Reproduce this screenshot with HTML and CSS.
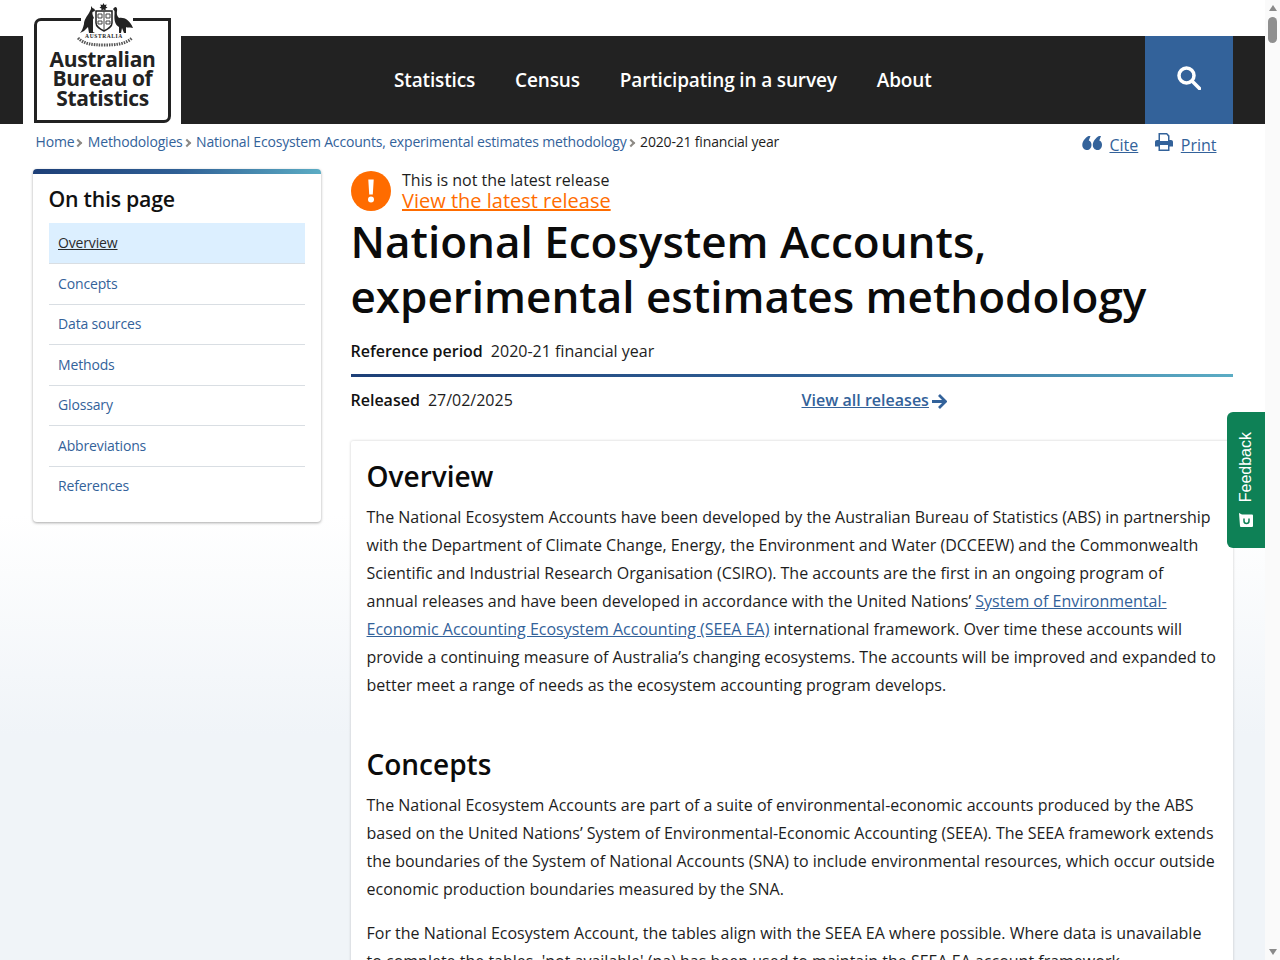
FILE: index.html
```html
<!DOCTYPE html>
<html lang="en">
<head>
<meta charset="utf-8">
<title>National Ecosystem Accounts, experimental estimates methodology</title>
<link rel="stylesheet" href="styles.css">
</head>
<body>
<div class="viewport">
  <header class="topbar">
    <div class="band">
      <div class="logo-plate">
        <div class="logo">
          <svg class="crest" viewBox="0 0 66 48" aria-hidden="true">
            <rect class="crest-gap" x="9" y="15" width="52" height="8"/>
            <path class="crest-fill" d="M31.500 3l1 2 2.200-.5-.8 2 1.600 1.300-2 .6.200 2-2.200-1-2.200 1 .2-2-2-.6 1.600-1.300-.8-2 2.200.5z"/>
            <path class="crest-fill" d="M8 33C10 31 11 28 12 24 12 20 15 16 17 13L19 9 19 6 20.500 8 22.500 9 23 11 20.500 12C20 14 21 16 22 18L21 19 21 32 23 33H17L16 27 12 31Z"/>
            <path class="crest-fill" d="M41 9L43 7C45 7 45.500 9 45 11 44.500 14 45 16 47 18 52 17 58 20 61 28 57 27 55 28 54 27L54 33H52L50 28 49 33H47L47 27C43 25 42 20 42.500 14L42.500 11Z"/>
            <path class="crest-shield" d="M24 11h16v12c0 4-4 6-8 8-4-2-8-4-8-8z"/>
            <path class="crest-line" d="M26 14h4v4h-4zM34 14h4v4h-4zM26 21h4v3h-4zM34 21h4v3h-4zM32 11v19"/>
            <path class="crest-wreath" d="M6 38c6 6 14 7 26 7s22-1 28-7"/>
            <text class="crest-text" x="32" y="38" text-anchor="middle">AUSTRALIA</text>
          </svg>
          <div class="logo-words">Australian<br>Bureau of<br>Statistics</div>
        </div>
      </div>
      <nav class="mainnav">
        <a href="#">Statistics</a>
        <a href="#">Census</a>
        <a href="#">Participating in a survey</a>
        <a href="#">About</a>
      </nav>
      <button class="search" aria-label="Search">
        <svg viewBox="0 0 24 24" class="search-icon"><circle cx="9.500" cy="9.500" r="7.500" /><path d="M15.500 15.500l7 7"/></svg>
      </button>
    </div>
  </header>

  <div class="crumbrow">
    <div class="crumbs">
      <a href="#">Home</a><span class="sep"></span><a href="#">Methodologies</a><span class="sep"></span><a href="#">National Ecosystem Accounts, experimental estimates methodology</a><span class="sep"></span><span class="current">2020-21 financial year</span>
    </div>
    <div class="tools">
      <span class="tool">
        <svg class="tool-icon quote" viewBox="0 0 20 14"><path d="M6.500 0h2L6.800 4.600C8.400 5 9.500 6.600 9.500 8.700 9.500 11.800 7.600 14 5 14 2.200 14 .3 11.800.3 9 .3 5.800 2.800 2 6.500 0zM17 0h2l-1.700 4.600c1.600.4 2.700 2 2.700 4.100 0 3.100-1.900 5.300-4.500 5.300-2.800 0-4.700-2.200-4.700-5 0-3.200 2.500-7 6.200-9z"/></svg>
        <a href="#">Cite</a>
      </span>
      <span class="tool">
        <svg class="tool-icon printer" viewBox="0 0 18 18"><path fill-rule="evenodd" d="M3.500 0h8.500l2.500 2.500V7H16c1.200 0 2 .8 2 2v4.500h-3.500V18h-11v-4.500H0V9c0-1.200.8-2 2-2h1.500zM5 1.500V8h8V3.500L11.500 1.500zM5 12v4.500h8V12z"/></svg>
        <a href="#">Print</a>
      </span>
    </div>
  </div>

  <div class="layout">
    <aside class="toc">
      <h2>On this page</h2>
      <ul>
        <li class="active"><a href="#">Overview</a></li>
        <li><a href="#">Concepts</a></li>
        <li><a href="#">Data sources</a></li>
        <li><a href="#">Methods</a></li>
        <li><a href="#">Glossary</a></li>
        <li><a href="#">Abbreviations</a></li>
        <li><a href="#">References</a></li>
      </ul>
    </aside>

    <main class="content">
      <div class="notice">
        <span class="notice-icon"><svg viewBox="0 0 40 40"><path d="M17.300 8.500h5.400l-.9 15h-3.600z"/><circle cx="20" cy="28.500" r="3"/></svg></span>
        <div class="notice-text">
          <div>This is not the latest release</div>
          <a href="#">View the latest release</a>
        </div>
      </div>
      <h1>National Ecosystem Accounts, experimental estimates methodology</h1>
      <p class="refperiod"><strong>Reference period</strong>2020-21 financial year</p>
      <div class="rule"></div>
      <div class="released">
        <p class="released-date"><strong>Released</strong>27/02/2025</p>
        <a class="all-releases" href="#"><span>View all releases</span><svg viewBox="0 0 15 15" class="arrow"><path d="M0 7.500h13M7 1l6.500 6.500L7 14"/></svg></a>
      </div>
      <article class="card">
        <h2>Overview</h2>
        <p>The National Ecosystem Accounts have been developed by the Australian Bureau of Statistics (ABS) in partnership with the Department of Climate Change, Energy, the Environment and Water (DCCEEW) and the Commonwealth Scientific and Industrial Research Organisation (CSIRO). The accounts are the first in an ongoing program of annual releases and have been developed in accordance with the United Nations’ <a href="#">System of Environmental-Economic Accounting Ecosystem Accounting (SEEA EA)</a> international framework. Over time these accounts will provide a continuing measure of Australia’s changing ecosystems. The accounts will be improved and expanded to better meet a range of needs as the ecosystem accounting program develops.</p>
        <h2 class="second">Concepts</h2>
        <p>The National Ecosystem Accounts are part of a suite of environmental-economic accounts produced by the ABS based on the United Nations’ System of Environmental-Economic Accounting (SEEA). The SEEA framework extends the boundaries of the System of National Accounts (SNA) to include environmental resources, which occur outside economic production boundaries measured by the SNA.</p>
        <p>For the National Ecosystem Account, the tables align with the SEEA EA where possible. Where data is unavailable to complete the tables, 'not available' (na) has been used to maintain the SEEA EA account framework.</p>
      </article>
    </main>
  </div>

  <button class="feedback">
    <svg class="fb-icon" viewBox="0 0 16 16"><path d="M1 1l3 1.500h10a1 1 0 0 1 1 1V14a1 1 0 0 1-1 1H3a1 1 0 0 1-1-1z"/><path class="fb-smile" d="M6 6.500v2.500a2.500 2.500 0 0 0 5 0V6.500"/></svg>
    <span>Feedback</span>
  </button>
</div>
<div class="scrollbar">
  <span class="sb-up"></span>
  <span class="sb-thumb"></span>
  <span class="sb-space"></span>
  <span class="sb-down"></span>
</div>
</body>
</html>
```
FILE: styles.css
```css
* { box-sizing: border-box; }
html, body { margin: 0; height: 960px; overflow: hidden; }
body {
  display: flex;
  width: 1280px;
  font-family: "Open Sans", "Liberation Sans", sans-serif;
  color: #1d1d1d;
  background: #fff;
}
a { color: #33629a; }
.viewport {
  position: relative;
  width: 1265px;
  height: 960px;
  overflow: hidden;
  background: linear-gradient(180deg, #fff 0, #fff 515px, #f0f4f8 735px, #f0f4f8 100%);
}
.topbar { padding-top: 36px; }
.band {
  height: 88px;
  background: #222;
  display: flex;
  align-items: stretch;
  padding-left: 23px;
  padding-right: 32px;
}
.logo-plate {
  position: relative;
  width: 158px;
  background: #fff;
}
.logo {
  position: absolute;
  left: 11px;
  top: -18px;
  width: 137px;
  height: 105px;
  border: 3px solid #222;
  border-radius: 7px 0 7px 0;
  text-align: center;
  background: #fff;
}
.crest {
  position: absolute;
  left: 35px;
  top: -21px;
  width: 66px;
  height: 48px;
}
.crest-gap { fill: #fff; }
.crest-fill { fill: #222; }
.crest-shield { fill: #fff; stroke: #222; stroke-width: 1.500; }
.crest-line { fill: none; stroke: #444; stroke-width: 1; }
.crest-wreath { fill: none; stroke: #555; stroke-width: 3; stroke-dasharray: 1.500 1; }
.crest-text { font-family: "Liberation Serif", serif; font-size: 5.500px; font-weight: 700; fill: #222; letter-spacing: .6px; }
.logo-words {
  position: absolute;
  left: 0;
  right: 0;
  top: 28.500px;
  font-size: 21px;
  line-height: 19.700px;
  font-weight: 700;
  color: #222;
  letter-spacing: -0.35px;
}
.mainnav {
  display: flex;
  align-items: center;
  gap: 40px;
  margin-left: 213px;
  flex: 1;
}
.mainnav a {
  color: #fff;
  font-size: 19px;
  font-weight: 600;
  text-decoration: none;
  letter-spacing: -0.15px;
}
.search {
  width: 88px;
  border: 0;
  padding: 0;
  background: #33629a;
  display: flex;
  align-items: center;
  justify-content: center;
}
.search-icon {
  width: 24px;
  height: 24px;
  margin-top: -4px;
  fill: none;
  stroke: #fff;
  stroke-width: 3.500;
  stroke-linecap: round;
}
.crumbrow {
  display: flex;
  justify-content: space-between;
  height: 45px;
  padding: 7px 48.500px 0 35.500px;
}
.crumbs {
  display: flex;
  align-items: center;
  height: 20px;
  font-size: 14px;
  letter-spacing: -0.18px;
}
.crumbs a { text-decoration: none; }
.current { color: #1d1d1d; }
.sep {
  width: 6px;
  height: 6px;
  margin: 3px 6.500px 0 1px;
  border-top: 2px solid #8d8a85;
  border-right: 2px solid #8d8a85;
  transform: rotate(45deg);
}
.tools { display: flex; gap: 16.500px; font-size: 16px; }
.tool { display: flex; align-items: center; gap: 8px; height: 24px; margin-top: 2px; }
.tool-icon { fill: #33629a; display: block; }
.quote { width: 20px; height: 14px; margin-top: -4px; margin-right: -1px; }
.printer { width: 18px; height: 18px; margin-top: -6px; }
.layout {
  display: flex;
  align-items: flex-start;
  gap: 29.500px;
  padding: 0 32px 0 33px;
}
.toc {
  flex: 0 0 288px;
  height: 353px;
  padding: 15px 16px 0;
  background: #fff;
  border-radius: 4px;
  position: relative;
  box-shadow: 0 1px 3px rgba(0, 0, 0, .35);
  overflow: hidden;
}
.toc::before {
  content: "";
  position: absolute;
  left: 0;
  right: 0;
  top: 0;
  height: 5px;
  background: linear-gradient(90deg, #1d3f77, #2f5f95 50%, #5bacc4);
}
.toc h2 {
  margin: 0 0 9px -0.5px;
  font-size: 21.300px;
  line-height: 30px;
  font-weight: 600;
  color: #111;
  letter-spacing: -0.25px;
}
.toc ul { list-style: none; margin: 0; padding: 0; }
.toc li {
  height: 40.500px;
  display: flex;
  align-items: center;
  padding: 0 0 .6px 9px;
  font-size: 14px;
  letter-spacing: -0.15px;
  border-bottom: 1px solid #d9dee3;
}
.toc li:last-child { border-bottom: 0; padding-bottom: 1.600px; }
.toc li a { text-decoration: none; }
.toc li.active { background: #dcefff; height: 41px; }
.toc li.active a { color: #2b2b2b; text-decoration: underline; }
.content { flex: 1; min-width: 0; }
.notice { display: flex; align-items: flex-start; gap: 11.500px; height: 45px; padding-top: 2px; }
.notice-icon {
  flex: 0 0 40px;
  width: 40px;
  height: 40px;
  border-radius: 50%;
  background: #ff6c00;
}
.notice-icon svg { display: block; fill: #fff; width: 40px; height: 40px; }
.notice-text { font-size: 16px; line-height: 20px; margin-top: -1px; color: #1d1d1d; }
.notice-text a { color: #ff6c00; font-size: 20px; line-height: 21px; display: block; }
h1 {
  margin: 0;
  font-size: 44px;
  line-height: 55px;
  font-weight: 600;
  color: #0b0b0b;
}
.refperiod, .released-date { margin: 0; font-size: 16px; line-height: 24px; }
.refperiod { margin-top: 15px; }
.refperiod strong, .released-date strong { font-weight: 600; margin-right: 8px; color: #111; }
.rule {
  height: 3px;
  margin-top: 11px;
  background: linear-gradient(90deg, #1d3f77, #2f5f95 50%, #5bacc4);
}
.released { display: flex; height: 64px; padding-top: 11px; }
.released-date { width: 451px; }
.all-releases {
  display: flex;
  align-items: center;
  height: 24px;
  font-size: 16px;
  font-weight: 600;
  gap: 3px;
  letter-spacing: .02px;
  text-decoration: none;
}
.all-releases span { text-decoration: underline; }
.arrow { width: 15px; height: 15px; margin-top: 2px; fill: none; stroke: #33629a; stroke-width: 2.800; }
.card {
  background: #fff;
  padding: 15px 16px 0 16px;
  box-shadow: 0 0 3px rgba(0, 0, 0, .2);
  height: 600px;
  border-radius: 2px;
}
.card h2 {
  margin: 0 0 7px;
  font-size: 28px;
  line-height: 40px;
  font-weight: 600;
  color: #0b0b0b;
}
.card h2.second { margin-top: 45px; }
.card p {
  margin: 0 0 16px;
  font-size: 16px;
  line-height: 28px;
  color: #1d1d1d;
}
.feedback {
  position: absolute;
  right: 0;
  top: 412px;
  width: 38px;
  height: 136px;
  padding: 0 0 20px;
  border: 0;
  border-radius: 6px 0 0 6px;
  background: #0e8156;
  color: #fff;
  display: flex;
  flex-direction: column-reverse;
  align-items: center;
  justify-content: flex-start;
  gap: 10px;
  font-family: "Liberation Sans", sans-serif;
}
.feedback span {
  writing-mode: vertical-rl;
  transform: rotate(180deg);
  font-size: 16px;
  line-height: 18px;
}
.fb-icon { width: 16px; height: 16px; fill: #fff; flex: none; }
.fb-smile { fill: none; stroke: #0e8156; stroke-width: 1.500; }
.scrollbar {
  width: 15px;
  height: 960px;
  background: #fafafa;
  display: flex;
  flex-direction: column;
  align-items: center;
}
.sb-up, .sb-down {
  width: 0;
  height: 0;
  border-left: 4.500px solid transparent;
  border-right: 4.500px solid transparent;
  margin: 5px 0;
}
.sb-up { border-bottom: 6px solid #8a8a8a; }
.sb-down { border-top: 6px solid #8a8a8a; }
.sb-thumb {
  width: 9px;
  height: 26px;
  margin-top: 1px;
  border-radius: 5px;
  background: #8f8f8f;
}
.sb-space { flex: 1; }
```
